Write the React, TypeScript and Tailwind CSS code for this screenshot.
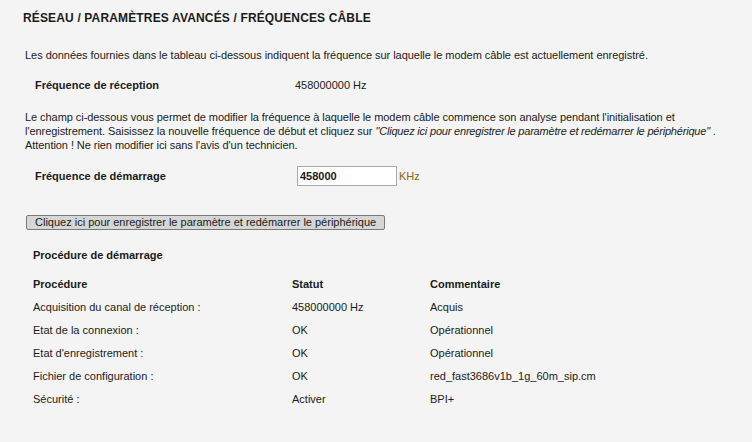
const rows = [
  { proc: "Acquisition du canal de réception :", status: "458000000 Hz", comment: "Acquis" },
  { proc: "Etat de la connexion :", status: "OK", comment: "Opérationnel" },
  { proc: "Etat d'enregistrement :", status: "OK", comment: "Opérationnel" },
  { proc: "Fichier de configuration :", status: "OK", comment: "red_fast3686v1b_1g_60m_sip.cm" },
  { proc: "Sécurité :", status: "Activer", comment: "BPI+" },
]

export default function App() {
  return (
    <div className="w-[752px] h-[442px] bg-[#f4f4f4] text-[#1b1b1b] text-[11px] leading-[14px] font-['Liberation_Sans',Arial,sans-serif] overflow-hidden">
      {/* Title */}
      <h1 className="pl-[23px] pt-[10px] text-[12px] leading-[16px] font-bold tracking-[0.15px]">
        RÉSEAU / PARAMÈTRES AVANCÉS / FRÉQUENCES CÂBLE
      </h1>

      <p className="pl-[25px] mt-[22px] tracking-[-0.04px]">
        Les données fournies dans le tableau ci-dessous indiquent la fréquence sur laquelle le modem câble est actuellement enregistré.
      </p>

      <div className="flex pl-[35px] mt-[16px]">
        <div className="w-[260px] font-bold">Fréquence de réception</div>
        <div>458000000 Hz</div>
      </div>

      <p className="pl-[25px] mt-[18px] whitespace-nowrap tracking-[-0.06px]">
        Le champ ci-dessous vous permet de modifier la fréquence à laquelle le modem câble commence son analyse pendant l'initialisation et
        <br />
        l'enregistrement. Saisissez la nouvelle fréquence de début et cliquez sur{" "}
        <i className="tracking-[-0.2px]">"Cliquez ici pour enregistrer le paramètre et redémarrer le périphérique"</i> .
        <br />
        Attention ! Ne rien modifier ici sans l'avis d'un technicien.
      </p>

      <div className="flex items-center pl-[35px] mt-[14px]">
        <div className="w-[262px] font-bold">Fréquence de démarrage</div>
        <input
          className="w-[100px] h-[20px] bg-white border border-[#a9a9a9] px-[2px] font-bold text-[11px] outline-none"
          defaultValue="458000"
        />
        <span className="ml-[2px] text-[#8a6a10]">KHz</span>
      </div>

      <button className="ml-[26px] mt-[29px] h-[15px] px-[8px] bg-[#d6d6d6] border border-[#7a7a7a] rounded-[2px] text-[11px] leading-[13px] text-[#1b1b1b]">
        Cliquez ici pour enregistrer le paramètre et redémarrer le périphérique
      </button>

      <div className="pl-[33px] mt-[18px] font-bold">Procédure de démarrage</div>

      {/* Startup table */}
      <div className="pl-[33px] mt-[15px]">
        <div className="flex font-bold h-[23px]">
          <div className="w-[259px]">Procédure</div>
          <div className="w-[138px]">Statut</div>
          <div>Commentaire</div>
        </div>
        {rows.map((r) => (
          <div key={r.proc} className="flex h-[23px]">
            <div className="w-[259px]">{r.proc}</div>
            <div className="w-[138px]">{r.status}</div>
            <div>{r.comment}</div>
          </div>
        ))}
      </div>
    </div>
  )
}
